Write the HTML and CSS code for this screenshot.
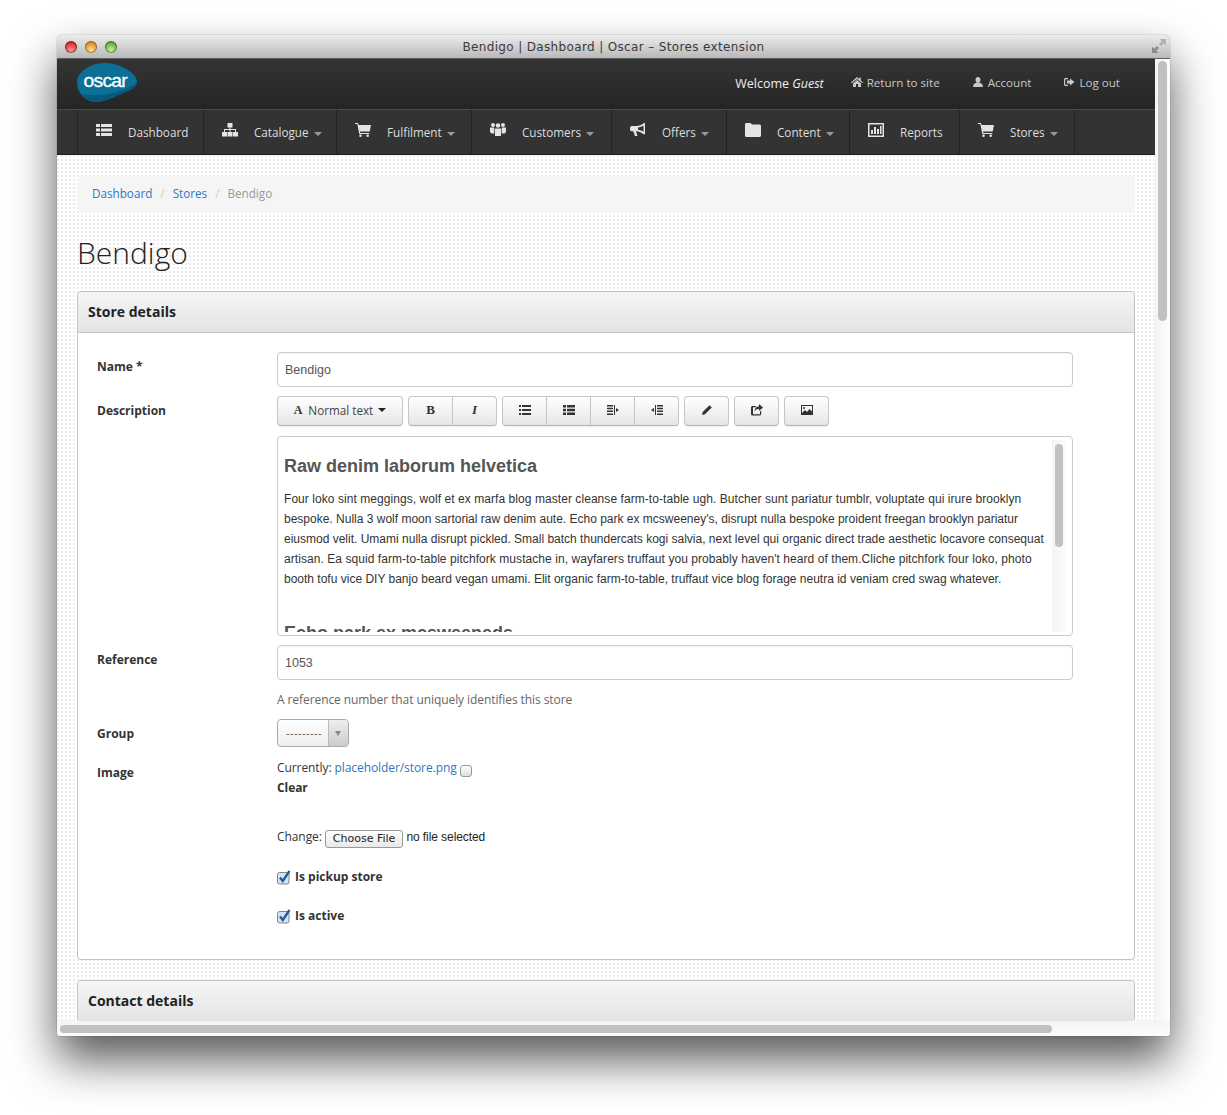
FILE: index.html
```html
<!DOCTYPE html>
<html lang="en">
<head>
  <meta charset="UTF-8">
  <title>Bendigo | Dashboard | Oscar – Stores extension</title>
  <link rel="stylesheet" href="styles.css">
</head>
<body>
  <div class="window">
    <div class="titlebar">
      <div class="lights">
        <span class="light red"></span>
        <span class="light amber"></span>
        <span class="light green"></span>
      </div>
      <div class="title">Bendigo | Dashboard | Oscar – Stores extension</div>
      <svg class="fullscreen" width="16" height="16" viewBox="0 0 16 16"><path d="M8.500 1H15v6.500l-2.200-2.200-2.800 2.800L8 6.100l2.800-2.800z" fill="#b0b0b0"/><path d="M7.500 15H1V8.500l2.200 2.200L6 7.900l2 2-2.800 2.800z" fill="#8c8c8c"/></svg>
    </div>

    <div class="browser">
      <div class="viewport">
        <header class="topbar">
          <svg class="logo" width="60" height="39" viewBox="1 0 59 39" preserveAspectRatio="none">
            <path d="M1 17C4 6 16 0 29 0c14 0 31 10 31 19 0 6-9 9-18 13-9 4-15 7-22 7C8 39 0 28 1 17z" fill="#0b6f97"/>
            <path d="M60 19c0 6-9 9-18 13-9 4-15 7-22 7-6 0-11-3-14-8 14 3 40 0 54-12z" fill="#085a7d"/>
            <text x="7.500" y="24" class="logo-text">oscar</text>
          </svg>
          <ul class="usernav">
            <li class="welcome">Welcome <em>Guest</em></li>
            <li><svg class="uicon" width="12" height="12" viewBox="0 0 12 12"><path d="M6 1 0 6.500l.8.8L6 3l5.200 4.300.8-.8L9.800 4.500V1.500H8.300V3.200zM2 7.500V11h3V8h2v3h3V7.500L6 4z"/></svg>Return to site</li>
            <li><svg class="uicon" width="12" height="12" viewBox="0 0 12 12"><path d="M6 1c1.500 0 2.500 1.200 2.500 2.800S7.500 7 6 7 3.500 5.400 3.500 3.800 4.500 1 6 1zM1 11c0-2.500 1.500-3.800 3.500-4.200.9.500 2.100.5 3 0C9.500 7.200 11 8.500 11 11z"/></svg>Account</li>
            <li><svg class="uicon" width="12" height="12" viewBox="0 0 12 12"><path d="M5 2H2.500C1.700 2 1 2.700 1 3.500v5C1 9.300 1.700 10 2.500 10H5V8.800H2.500L2.200 8.500v-5l.3-.3H5zM7 2.500V4.500H4v3h3v2L11.500 6z"/></svg>Log out</li>
          </ul>
        </header>

        <nav class="mainnav">
          <a class="navitem"><svg class="nicon" width="16" height="14" viewBox="0 0 16 14"><path d="M0 1h4v3H0zM5 1h11v3H5zM0 5.500h4v3H0zM5 5.500h11v3H5zM0 10h4v3H0zM5 10h11v3H5z"/></svg>Dashboard</a>
          <a class="navitem"><svg class="nicon" width="16" height="14" viewBox="0 0 16 14"><path d="M5.500 0h5v4.500H8.500V6H14v3h2v4.500h-5V9h2V7H8.500v2h2v4.500h-5V9h2V7H3v2h2v4.500H0V9h2V6h5.500V4.500h-2z"/></svg>Catalogue<span class="caret"></span></a>
          <a class="navitem"><svg class="nicon" width="16" height="14" viewBox="0 0 16 14"><path d="M0 0h3l.6 2H16l-1.300 6.500H5l.3 1.500h9v1H4.300L2.300 1H0z"/><circle cx="5.500" cy="12.700" r="1.300"/><circle cx="12.700" cy="12.700" r="1.300"/></svg>Fulfilment<span class="caret"></span></a>
          <a class="navitem"><svg class="nicon" width="16" height="14" viewBox="0 0 16 14"><circle cx="3" cy="2" r="2"/><circle cx="13" cy="2" r="2"/><circle cx="8" cy="2.500" r="2.300"/><path d="M0 4.500h4.300v6H1.500L0 9zM11.700 4.500H16V9l-1.500 1.500h-2.800zM5 5.500h6V13H5z"/></svg>Customers<span class="caret"></span></a>
          <a class="navitem"><svg class="nicon" width="16" height="14" viewBox="0 0 16 14"><path d="M15 0v11l-1 .6C11.500 9.500 9 8.500 6 8.300L7.500 13H5L3.300 8.300H2C.9 8.300 0 7.300 0 6.200V5C0 3.900.9 3 2 3h4c3 0 6-1 8-3zM13.500 2.500C12 3.600 10 4.300 8 4.500v2.300c2 .2 4 1 5.500 2z"/></svg>Offers<span class="caret"></span></a>
          <a class="navitem"><svg class="nicon" width="16" height="14" viewBox="0 0 16 14"><path d="M0 1.500C0 .7.700 0 1.500 0h4L7 1.500h7.500c.8 0 1.500.7 1.500 1.500v9.500c0 .8-.7 1.500-1.500 1.500h-13C.7 14 0 13.300 0 12.500z"/></svg>Content<span class="caret"></span></a>
          <a class="navitem"><svg class="nicon" width="16" height="14" viewBox="0 0 16 14"><path fill-rule="evenodd" d="M0 0h16v14H0zM1.500 1.500v11h13v-11zM3 7h2v4H3zM6 4h2v7H6zM9 6h2v5H9zM12 3h1.500v8H12z"/></svg>Reports</a>
          <a class="navitem"><svg class="nicon" width="16" height="14" viewBox="0 0 16 14"><path d="M0 0h3l.6 2H16l-1.300 6.500H5l.3 1.500h9v1H4.300L2.300 1H0z"/><circle cx="5.500" cy="12.700" r="1.300"/><circle cx="12.700" cy="12.700" r="1.300"/></svg>Stores<span class="caret"></span></a>
        </nav>

        <main class="content">
          <ul class="breadcrumb">
            <li><a href="#">Dashboard</a><span class="divider">/</span></li>
            <li><a href="#">Stores</a><span class="divider">/</span></li>
            <li class="active">Bendigo</li>
          </ul>

          <h1>Bendigo</h1>

          <section class="panel">
            <h2 class="panel-head">Store details</h2>
            <form class="panel-body">
              <div class="row">
                <label class="row-label">Name *</label>
                <div class="field"><input class="textbox" type="text" value="Bendigo"></div>
              </div>

              <div class="row">
                <label class="row-label">Description</label>
                <div class="field">
                  <div class="toolbar">
                    <div class="btn-group"><button type="button" class="btn btn-font"><b class="btn-a">A</b> Normal text <span class="caret-dark"></span></button></div>
                    <div class="btn-group">
                      <button type="button" class="btn serif"><b>B</b></button>
                      <button type="button" class="btn serif"><b><i>I</i></b></button>
                    </div>
                    <div class="btn-group">
                      <button type="button" class="btn"><svg width="12" height="10" viewBox="0 0 12 10"><path d="M0 0h2v2H0zM3 0h9v2H3zM0 4h2v2H0zM3 4h9v2H3zM0 8h2v2H0zM3 8h9v2H3z"/></svg></button>
                      <button type="button" class="btn"><svg width="12" height="10" viewBox="0 0 12 10"><path d="M0 0h3v2.500H0zM4 0h8v2.500H4zM0 3.700h3v2.500H0zM4 3.700h8v2.500H4zM0 7.400h3V10H0zM4 7.400h8V10H4z"/></svg></button>
                      <button type="button" class="btn"><svg width="12" height="10" viewBox="0 0 12 10"><path d="M0 0h6v1.500H0zM0 2.800h6v1.500H0zM0 5.600h6v1.500H0zM0 8.400h6V10H0zM7 0h1v10H7zM9 3l3 2-3 2z"/></svg></button>
                      <button type="button" class="btn"><svg width="12" height="10" viewBox="0 0 12 10"><path d="M6 0h6v1.500H6zM6 2.800h6v1.500H6zM6 5.600h6v1.500H6zM6 8.400h6V10H6zM4 0h1v10H4zM3 3 0 5l3 2z"/></svg></button>
                    </div>
                    <div class="btn-group"><button type="button" class="btn"><svg width="12" height="12" viewBox="0 0 12 12"><path d="M1 11l.7-3L8.500 1.200l2.300 2.300L4 10.300z"/></svg></button></div>
                    <div class="btn-group"><button type="button" class="btn"><svg width="12" height="12" viewBox="0 0 12 12"><path d="M8 0l4 3.500L8 7V5C6 5 4.500 5.500 3.500 7.500 3.500 4.500 5.500 2.500 8 2.300zM1.500 2H5v1.200H2v7h7V7.500l1.200-1V10c0 .8-.7 1.500-1.500 1.500H1.500C.7 11.500 0 10.800 0 10V3.500C0 2.700.7 2 1.500 2z"/></svg></button></div>
                    <div class="btn-group"><button type="button" class="btn"><svg width="12" height="10" viewBox="0 0 12 10"><path fill-rule="evenodd" d="M0 0h12v10H0zM1 1v7l3-3 2 2 2.500-3L11 6.500V1zM3 2a1 1 0 1 1 0 2 1 1 0 0 1 0-2z"/></svg></button></div>
                  </div>
                  <div class="editor">
                    <div class="editor-text">
                      <h3>Raw denim laborum helvetica</h3>
                      <p><span class="wide">Four loko sint meggings, wolf et ex marfa blog master cleanse farm-to-table ugh. Butcher sunt pariatur tumblr, voluptate qui irure brooklyn</span><br>bespoke. Nulla 3 wolf moon sartorial raw denim aute. Echo park ex mcsweeney's, disrupt nulla bespoke proident freegan brooklyn pariatur<br>eiusmod velit. Umami nulla disrupt pickled. Small batch thundercats kogi salvia, next level qui organic direct trade aesthetic locavore consequat<br><span class="wide">artisan. Ea squid farm-to-table pitchfork mustache in, wayfarers truffaut you probably haven't heard of them.Cliche pitchfork four loko, photo</span><br>booth tofu vice DIY banjo beard vegan umami. Elit organic farm-to-table, truffaut vice blog forage neutra id veniam cred swag whatever.</p>
                      <h3 class="second">Echo park ex mcsweeneds</h3>
                    </div>
                    <div class="editor-scroll"><span class="editor-thumb"></span></div>
                  </div>
                </div>
              </div>

              <div class="row">
                <label class="row-label">Reference</label>
                <div class="field">
                  <input class="textbox" type="text" value="1053">
                  <p class="help">A reference number that uniquely identifies this store</p>
                </div>
              </div>

              <div class="row">
                <label class="row-label">Group</label>
                <div class="field">
                  <div class="select"><span class="select-value">---------</span><span class="select-arrow"></span></div>
                </div>
              </div>

              <div class="row row-image">
                <label class="row-label">Image</label>
                <div class="field">
                  <div class="line">Currently: <a href="#">placeholder/store.png</a> <span class="clearbox"></span></div>
                  <div class="line"><b>Clear</b></div>
                  <div class="line line-change">Change: <span class="filebtn">Choose File</span> <span class="filename">no file selected</span></div>
                  <div class="check">
                    <svg width="14" height="15" viewBox="0 0 14 15"><rect x=".5" y="2.500" width="11.500" height="11.500" rx="2" fill="#d9e3f0" stroke="#7f858d"/><path d="M3 7.500l2.800 3.500L12.500 1" fill="none" stroke="#1d5c9e" stroke-width="2.300"/></svg>
                    <b>Is pickup store</b>
                  </div>
                  <div class="check">
                    <svg width="14" height="15" viewBox="0 0 14 15"><rect x=".5" y="2.500" width="11.500" height="11.500" rx="2" fill="#d9e3f0" stroke="#7f858d"/><path d="M3 7.500l2.800 3.500L12.500 1" fill="none" stroke="#1d5c9e" stroke-width="2.300"/></svg>
                    <b>Is active</b>
                  </div>
                </div>
              </div>
            </form>
          </section>

          <section class="panel">
            <h2 class="panel-head">Contact details</h2>
          </section>
        </main>
      </div>
      <div class="vscroll"><span class="vthumb"></span></div>
    </div>

    <div class="hscroll"><span class="hthumb"></span></div>
  </div>
</body>
</html>
```

FILE: styles.css
```css
html, body {
  margin: 0;
  padding: 0;
  background: #fff;
}

body {
  height: 1115px;
  padding: 35px 0 0 57px;
  box-sizing: border-box;
  overflow: hidden;
  font-family: "Open Sans", Arial, sans-serif;
  font-size: 12px;
  line-height: 20px;
  color: #333;
}

/* Ventana */
.window {
  width: 1113px;
  height: 1001px;
  display: flex;
  flex-direction: column;
  border-radius: 5px 5px 3px 3px;
  overflow: hidden;
  box-shadow: 0 24px 46px rgba(0, 0, 0, 0.66), 0 0 1px rgba(0, 0, 0, 0.7);
}

.titlebar {
  height: 23px;
  flex: none;
  display: flex;
  align-items: center;
  position: relative;
  background: linear-gradient(#ececec, #b9b9b9);
  border-bottom: 1px solid #5f5f5f;
}

.lights {
  display: flex;
  gap: 8px;
  margin-left: 8px;
}

.light {
  width: 12px;
  height: 12px;
  border-radius: 50%;
  box-shadow: inset 0 0 0 1px rgba(0, 0, 0, 0.3);
}

.red { background: radial-gradient(circle at 50% 75%, #ff9a9a, #d8232a 70%); }
.amber { background: radial-gradient(circle at 50% 75%, #ffdf9a, #d98a1e 70%); }
.green { background: radial-gradient(circle at 50% 75%, #c5f0a0, #5aa83a 70%); }

.title {
  position: absolute;
  left: 0;
  right: 0;
  text-align: center;
  font-family: "DejaVu Sans", sans-serif;
  font-size: 12px;
  letter-spacing: 0.35px;
  color: #3a3a3a;
}

.fullscreen {
  position: absolute;
  right: 3px;
  top: 3px;
}

.browser {
  flex: 1;
  min-height: 0;
  display: flex;
}

.viewport {
  width: 1098px;
  flex: none;
  overflow: hidden;
}

.vscroll {
  flex: 1;
  background: linear-gradient(90deg, #f4f4f4, #fdfdfd);
  padding: 2px 3px;
}

.vthumb {
  display: block;
  width: 9px;
  height: 260px;
  border-radius: 5px;
  background: #c1c1c1;
}

.hscroll {
  height: 15px;
  flex: none;
  box-sizing: border-box;
  padding: 4px 3px 3px;
  background: linear-gradient(#f4f4f4, #fcfcfc);
}

.hthumb {
  display: block;
  width: 992px;
  height: 8px;
  border-radius: 4px;
  background: #c1c1c1;
}

/* Cabecera */
.topbar {
  height: 50px;
  box-sizing: border-box;
  display: flex;
  justify-content: space-between;
  padding: 4px 35px 0 20px;
  background: linear-gradient(#343434, #252525);
}

.logo-text {
  font-family: "Liberation Sans", Arial, sans-serif;
  font-size: 19px;
  letter-spacing: -0.8px;
  fill: #fff;
  stroke: #fff;
  stroke-width: 0.3px;
}

.usernav {
  list-style: none;
  display: flex;
  margin: 0;
  padding: 10px 0 0;
  font-size: 11.6px;
  color: #c8c8c8;
}

.usernav li {
  margin-left: 32px;
}

.usernav .welcome {
  margin-right: -5px;
  padding-top: 1px;
  font-size: 12.5px;
  color: #eee;
}

.uicon {
  fill: #c8c8c8;
  margin-right: 4px;
  vertical-align: -1px;
}

.mainnav {
  height: 46px;
  box-sizing: border-box;
  display: grid;
  grid-template-columns: 126px 133px 135px 140px 115px 123px 110px 116px;
  justify-content: start;
  padding-left: 20px;
  font-size: 11.7px;
  background: #333;
  border-top: 1px solid #484848;
  border-bottom: 1px solid #1e1e1e;
}

.navitem {
  display: flex;
  align-items: center;
  padding: 0 0 0 18px;
  border-left: 1px solid #232323;
  color: #ddd;
  white-space: nowrap;
}

.navitem:last-child {
  border-right: 1px solid #232323;
}

.nicon {
  flex: none;
  fill: #e4e4e4;
  margin: -4px 16px 0 0;
}

.caret {
  width: 0;
  height: 0;
  margin: 4px 0 0 5px;
  border-top: 4px solid #999;
  border-left: 4px solid transparent;
  border-right: 4px solid transparent;
}

/* Contenido */
.content {
  height: 866px;
  box-sizing: border-box;
  padding: 21px 20px 0;
  overflow: hidden;
  background-color: #fff;
  background-image: radial-gradient(circle at 1px 1px, #ececec 1px, transparent 1px);
  background-size: 4px 4px;
}

.breadcrumb {
  list-style: none;
  display: flex;
  height: 36px;
  box-sizing: border-box;
  margin: 0 0 0 1px;
  padding: 0 14px 2px;
  align-items: center;
  border-radius: 4px;
  font-size: 11.7px;
  background: #f5f5f5;
  color: #999;
}

.breadcrumb a {
  color: #2a78c5;
  text-decoration: none;
}

.divider {
  padding: 0 8px;
  color: #ccc;
}

h1 {
  margin: 21px 0 18px;
  font-size: 30px;
  line-height: 40px;
  font-weight: 300;
  color: #222;
}

.panel {
  border: 1px solid #c2c2c2;
  border-radius: 4px;
  margin-bottom: 20px;
  background: #fff;
}

.panel-head {
  margin: 0;
  height: 40px;
  box-sizing: border-box;
  padding: 0 10px;
  font-size: 14px;
  line-height: 40px;
  font-weight: 700;
  color: #222;
  background: linear-gradient(#f5f5f5, #e4e4e4);
  border-radius: 4px 4px 0 0;
}

.panel-body {
  padding: 19px 19px 33px;
  border-top: 1px solid #c4c4c4;
}

.row {
  display: flex;
  margin-bottom: 9px;
}

.row-label {
  width: 180px;
  flex: none;
  padding-top: 5px;
  font-weight: 700;
}

.field {
  width: 796px;
}

.textbox {
  display: block;
  width: 100%;
  height: 35px;
  box-sizing: border-box;
  padding: 0 7px;
  border: 1px solid #ccc;
  border-radius: 4px;
  font-family: "Liberation Sans", Arial, sans-serif;
  font-size: 12.5px;
  color: #555;
  box-shadow: inset 0 1px 1px rgba(0, 0, 0, 0.05);
}

.help {
  margin: 10px 0 0;
  letter-spacing: -0.08px;
  color: #666;
}

/* Editor */
.toolbar {
  display: flex;
  gap: 5px;
  margin-bottom: 10px;
}

.btn-group {
  display: flex;
}

.btn {
  width: 45px;
  height: 30px;
  padding: 0 0 2px;
  margin-left: -1px;
  display: flex;
  align-items: center;
  justify-content: center;
  border: 1px solid #c6c6c6;
  border-bottom-color: #b3b3b3;
  background: linear-gradient(#fff, #e6e6e6);
  font-family: "Open Sans", Arial, sans-serif;
  font-size: 11.7px;
  color: #444;
  box-shadow: 0 1px 1px rgba(0, 0, 0, 0.05);
}

.btn svg {
  fill: #333;
}

.btn:first-child {
  margin-left: 0;
  border-radius: 4px 0 0 4px;
}

.btn:last-child {
  border-radius: 0 4px 4px 0;
}

.btn:only-child {
  border-radius: 4px;
}

.btn-font {
  width: 126px;
  white-space: pre;
}

.btn-a {
  font-family: "Liberation Serif", serif;
  font-size: 12px;
  color: #333;
  margin-right: 3px;
}

.serif {
  font-family: "Liberation Serif", serif;
  font-size: 13px;
  color: #333;
}

.caret-dark {
  width: 0;
  height: 0;
  margin-left: 2px;
  border-top: 4px solid #222;
  border-left: 4px solid transparent;
  border-right: 4px solid transparent;
}

.editor {
  height: 200px;
  box-sizing: border-box;
  display: flex;
  padding: 3px 6px 3px 0;
  border: 1px solid #ccc;
  border-radius: 4px;
}

.editor-text {
  flex: 1;
  min-width: 0;
  overflow: hidden;
  padding: 3px 0 0 6px;
  font-family: "Liberation Sans", Arial, sans-serif;
  font-size: 12px;
  line-height: 20px;
  color: #333;
  white-space: nowrap;
}

.editor-text h3 {
  margin: 11px 0 11px;
  font-size: 18px;
  line-height: 24px;
  color: #555;
}

.editor-text p {
  margin: 0 0 32px;
}

.editor-text .second {
  margin: 0;
}

.wide {
  letter-spacing: 0.06px;
}

.editor-scroll {
  width: 14px;
  flex: none;
  box-sizing: border-box;
  padding: 4px 3px;
  background: linear-gradient(90deg, #f3f3f3, #fbfbfb);
}

.editor-thumb {
  display: block;
  width: 8px;
  height: 103px;
  border-radius: 4px;
  background: #c1c1c1;
}

/* Campos */
.select {
  width: 72px;
  height: 28px;
  box-sizing: border-box;
  display: flex;
  border: 1px solid #aaa;
  border-radius: 4px;
  background: linear-gradient(#fff, #eee);
  overflow: hidden;
}

.select-value {
  flex: 1;
  padding-left: 8px;
  line-height: 26px;
  font-size: 11px;
  letter-spacing: 0.45px;
  color: #555;
}

.select-arrow {
  width: 19px;
  position: relative;
  border-left: 1px solid #bbb;
  background: linear-gradient(#eee, #ccc);
}

.select-arrow::after {
  content: "";
  position: absolute;
  left: 6px;
  top: 11px;
  border-top: 5px solid #888;
  border-left: 3px solid transparent;
  border-right: 3px solid transparent;
}

.row-image {
  margin: 0;
  padding-top: 2px;
}

.line {
  letter-spacing: -0.08px;
}

.line a {
  color: #2a78c5;
  text-decoration: none;
}

.clearbox {
  display: inline-block;
  width: 10px;
  height: 10px;
  vertical-align: -5px;
  border: 1px solid #999;
  border-radius: 3px;
  background: linear-gradient(#fff, #ddd);
}

.line-change {
  margin-top: 29px;
}

.filebtn {
  display: inline-block;
  height: 18px;
  box-sizing: border-box;
  padding: 0 7px;
  line-height: 16px;
  vertical-align: -1px;
  border: 1px solid #999;
  border-radius: 3px;
  background: linear-gradient(#fff, #e8e8e8);
  font-family: "DejaVu Sans", sans-serif;
  font-size: 11px;
  letter-spacing: 0;
  color: #222;
}

.filename {
  font-family: "Liberation Sans", Arial, sans-serif;
  color: #222;
}

.check {
  display: flex;
  align-items: center;
  gap: 4px;
  margin-top: 19px;
}
```
